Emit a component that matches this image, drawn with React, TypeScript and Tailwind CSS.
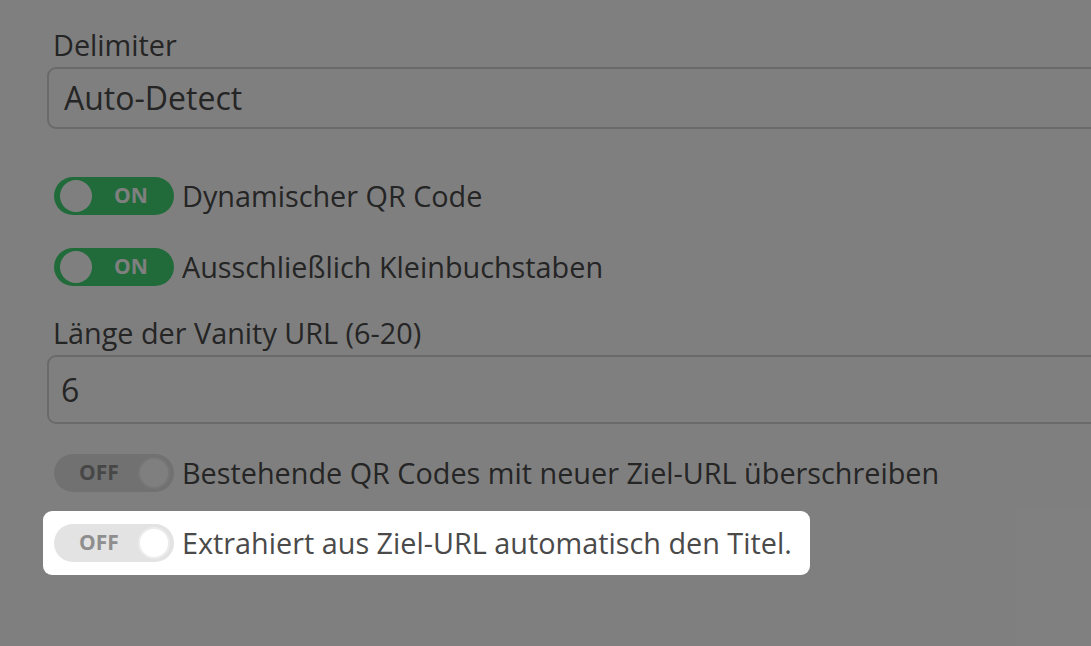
import React from 'react';

const Toggle = ({ on }: { on: boolean }) =>
    on ? (
        <div className="flex h-[38px] w-[120px] shrink-0 items-center rounded-full bg-[#42d676] pl-[6px] pr-[4px]">
            <div className="h-[32px] w-[32px] rounded-full bg-white" />
            <span className="flex-1 text-center text-[21px] font-bold text-white">ON</span>
        </div>
    ) : (
        <div className="flex h-[38px] w-[120px] shrink-0 items-center rounded-full bg-[#e3e3e3] pl-[6px] pr-[4px]">
            <span className="flex-1 text-center text-[21px] font-bold text-[#8e8e8e]">OFF</span>
            <div className="h-[32px] w-[32px] rounded-full border-2 border-[#ececec] bg-white" />
        </div>
    );

const ToggleRow = ({ on, label }: { on: boolean; label: string }) => (
    <div className="flex items-center gap-[8px] pl-[7px]">
        <Toggle on={on} />
        <span className="text-[28.8px] leading-[38px]">{label}</span>
    </div>
);

const App: React.FC = () => {
    return (
        <div className="relative h-[646px] w-[1091px] overflow-hidden bg-white font-['Open_Sans',sans-serif] text-[#4a4a4a]">
            <div className="w-[1120px] pl-[47px] pt-[26px]">
                <label className="block pl-[6px] text-[28.8px] leading-[38px]">Delimiter</label>
                <div className="mt-[3px] flex h-[62px] items-center rounded-[9px] border-2 border-[#d4d4d4] pl-[15px] text-[32px]">
                    Auto-Detect
                </div>

                <div className="mt-[48px]">
                    <ToggleRow on label="Dynamischer QR Code" />
                </div>
                <div className="mt-[33px]">
                    <ToggleRow on label="Ausschließlich Kleinbuchstaben" />
                </div>

                <label className="mt-[28px] block pl-[6px] text-[28.8px] leading-[38px]">Länge der Vanity URL (6-20)</label>
                <div className="mt-[3px] flex h-[69px] items-center rounded-[9px] border-2 border-[#d4d4d4] pl-[12px] text-[32px]">
                    6
                </div>

                <div className="mt-[30px]">
                    <ToggleRow on={false} label="Bestehende QR Codes mit neuer Ziel-URL überschreiben" />
                </div>
            </div>

            {/* tour overlay */}
            <div className="absolute inset-0 bg-black/50" />

            {/* highlighted step sits above the overlay */}
            <div className="relative z-10 ml-[43px] mt-[19px] inline-flex h-[64px] items-center rounded-[9px] bg-white pl-[4px] pr-[18px] text-[#4a4a4a]">
                <ToggleRow on={false} label="Extrahiert aus Ziel-URL automatisch den Titel." />
            </div>
        </div>
    );
};

export default App;
